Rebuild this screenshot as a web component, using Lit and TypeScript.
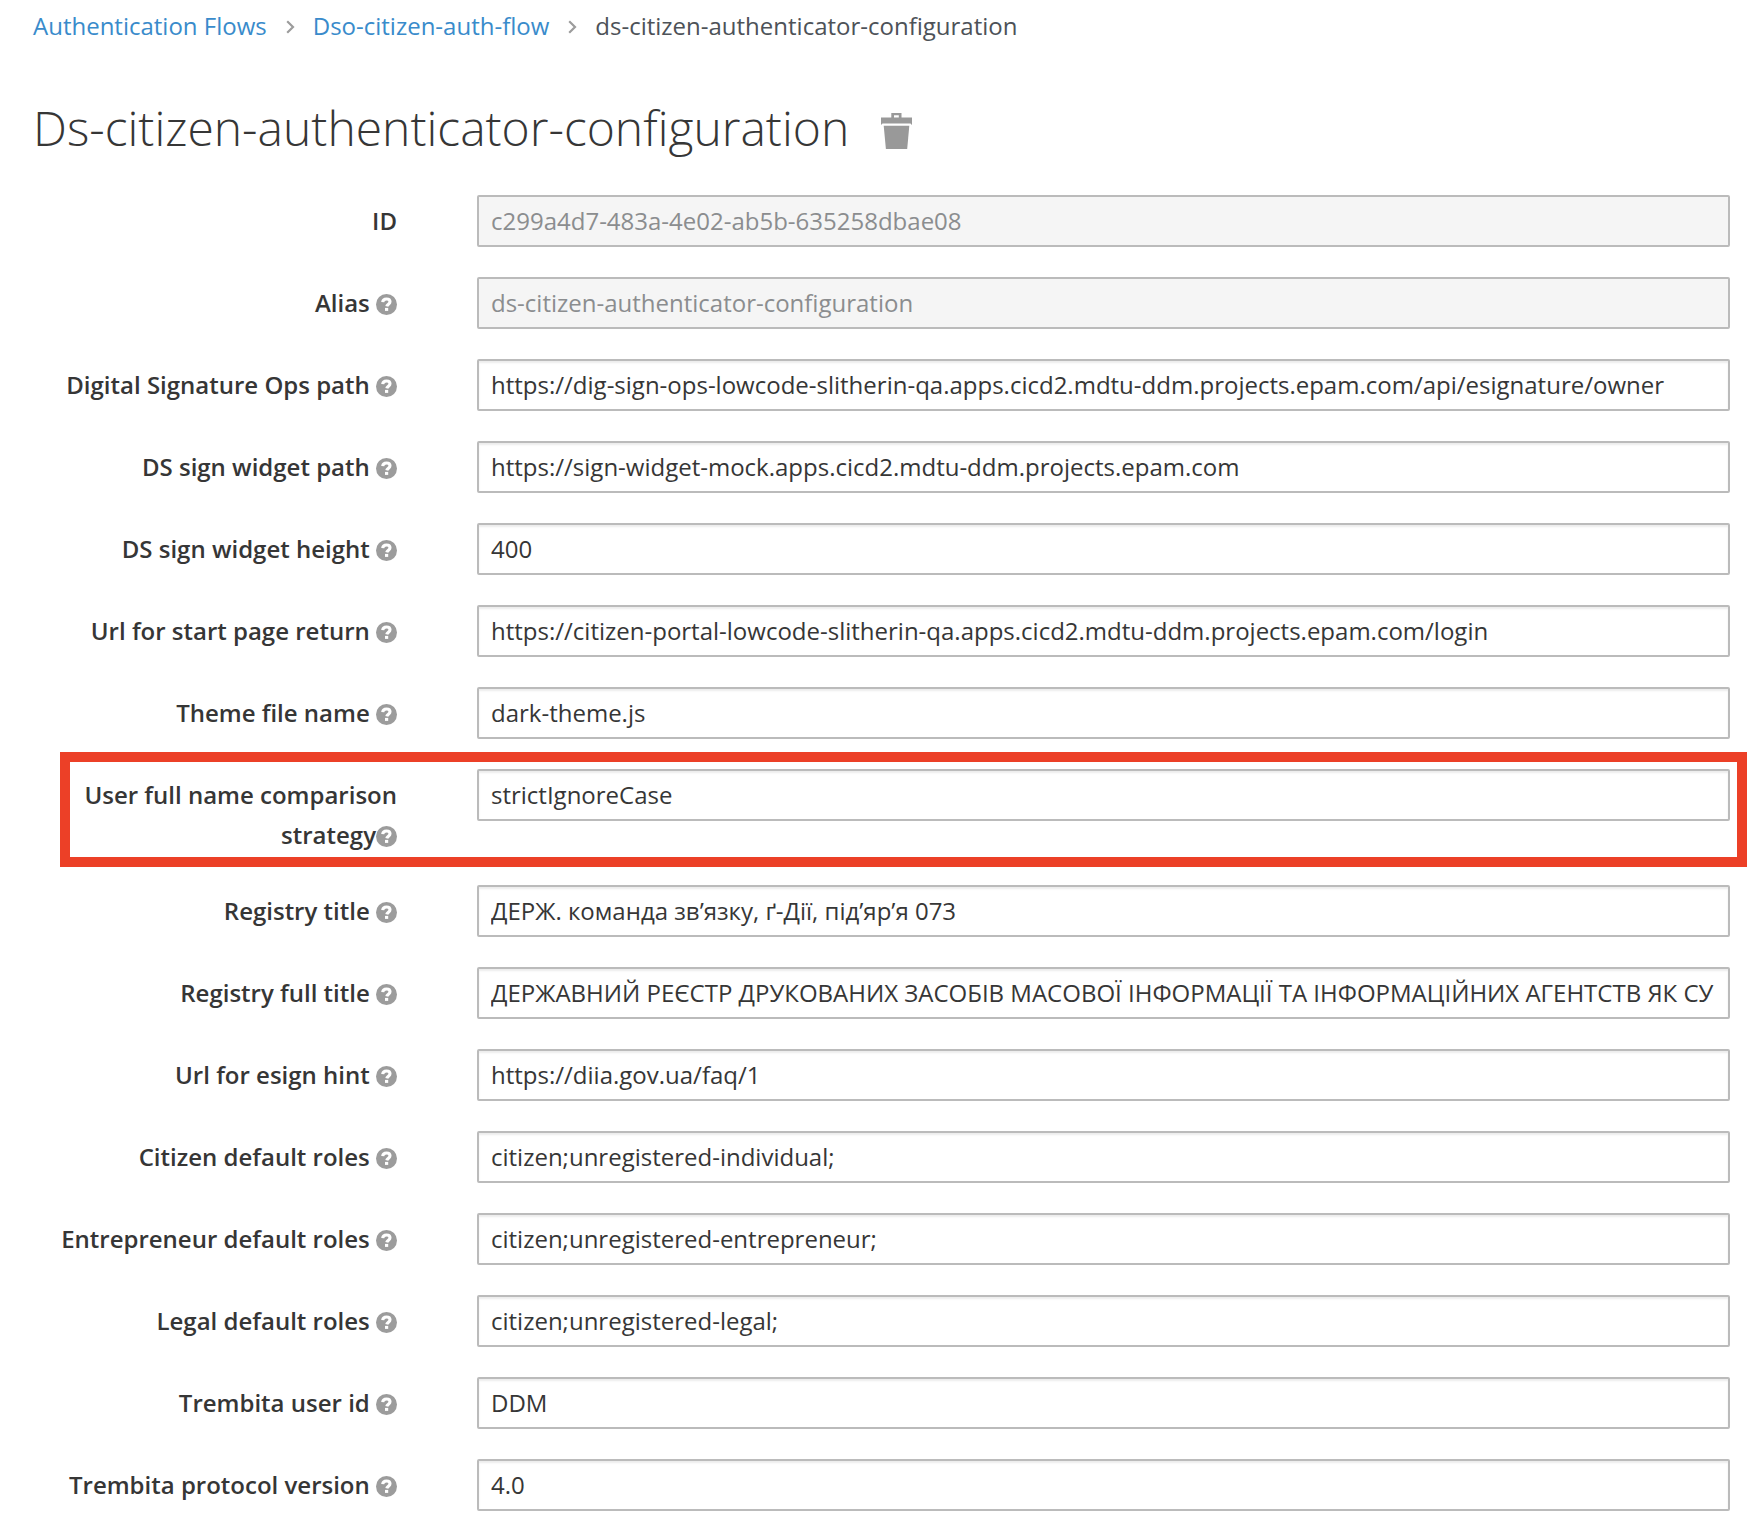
import { LitElement, html, css, svg, nothing } from "lit";
import { customElement, property } from "lit/decorators.js";

interface Field {
  id: string;
  label: string;
  value: string;
  help?: boolean;
  disabled?: boolean;
  highlighted?: boolean;
}

const FIELDS: Field[] = [
  { id: "id", label: "ID", value: "c299a4d7-483a-4e02-ab5b-635258dbae08", help: false, disabled: true },
  { id: "alias", label: "Alias", value: "ds-citizen-authenticator-configuration", disabled: true },
  {
    id: "ops-path",
    label: "Digital Signature Ops path",
    value: "https://dig-sign-ops-lowcode-slitherin-qa.apps.cicd2.mdtu-ddm.projects.epam.com/api/esignature/owner",
  },
  { id: "widget-path", label: "DS sign widget path", value: "https://sign-widget-mock.apps.cicd2.mdtu-ddm.projects.epam.com" },
  { id: "widget-height", label: "DS sign widget height", value: "400" },
  {
    id: "start-url",
    label: "Url for start page return",
    value: "https://citizen-portal-lowcode-slitherin-qa.apps.cicd2.mdtu-ddm.projects.epam.com/login",
  },
  { id: "theme", label: "Theme file name", value: "dark-theme.js" },
  { id: "comparison", label: "User full name comparison strategy", value: "strictIgnoreCase", highlighted: true },
  { id: "registry-title", label: "Registry title", value: "ДЕРЖ. команда зв’язку, ґ-Дії, під’яр’я 073" },
  {
    id: "registry-full-title",
    label: "Registry full title",
    value: "ДЕРЖАВНИЙ РЕЄСТР ДРУКОВАНИХ ЗАСОБІВ МАСОВОЇ ІНФОРМАЦІЇ ТА ІНФОРМАЦІЙНИХ АГЕНТСТВ ЯК СУ",
  },
  { id: "esign-hint", label: "Url for esign hint", value: "https://diia.gov.ua/faq/1" },
  { id: "citizen-roles", label: "Citizen default roles", value: "citizen;unregistered-individual;" },
  { id: "entrepreneur-roles", label: "Entrepreneur default roles", value: "citizen;unregistered-entrepreneur;" },
  { id: "legal-roles", label: "Legal default roles", value: "citizen;unregistered-legal;" },
  { id: "trembita-user", label: "Trembita user id", value: "DDM" },
  { id: "trembita-version", label: "Trembita protocol version", value: "4.0" },
];

const helpMark = svg`
  <circle cx="10.5" cy="10.5" r="10.5" fill="#9c9c9c"></circle>
  <path d="M6.7 8.2C6.9 6 8.4 5 10.5 5c2.1 0 3.5 1.1 3.5 2.8 0 2.3-2.8 2.4-3.2 4.6" fill="none" stroke="#fff" stroke-width="3.1"></path>
  <rect x="9" y="13.9" width="3.2" height="3" fill="#fff"></rect>`;

@customElement("config-field")
export class ConfigField extends LitElement {
  @property({ attribute: false }) field!: Field;

  static styles = css`
    :host {
      display: block;
    }
    .row {
      position: relative;
      display: grid;
      grid-template-columns: 364fr 1253fr;
      column-gap: 80px;
      align-items: start;
    }
    .highlighted::after {
      content: "";
      position: absolute;
      inset: -17px -17px -12px 27px;
      border: 10px solid #ec4027;
      pointer-events: none;
    }
    .label {
      padding-top: 6px;
      font-weight: 600;
      line-height: 40px;
      text-align: right;
      color: #363636;
    }
    .last {
      white-space: nowrap;
    }
    .help {
      width: 21px;
      height: 21px;
      vertical-align: -3px;
    }
    .input {
      box-sizing: border-box;
      width: 100%;
      height: 52px;
      margin: 0;
      padding: 3px 12px 5px;
      border: 2px solid #bbb;
      border-radius: 2px;
      background: #fff;
      box-shadow: inset 0 2px 2px rgba(3, 3, 3, 0.075);
      color: #363636;
      font: inherit;
      line-height: 40px;
    }
    .input:disabled {
      background: #f5f5f5;
      box-shadow: none;
      color: #8b8d8f;
    }
  `;

  render() {
    const f = this.field;
    const cut = f.label.lastIndexOf(" ") + 1;
    const gap = f.highlighted ? "" : " ";
    const help = f.help === false
      ? nothing
      : html`${gap}<svg class="help" viewBox="0 0 21 21" aria-hidden="true">${helpMark}</svg>`;
    return html`
      <div class="row ${f.highlighted ? "highlighted" : ""}">
        <label class="label" for=${f.id}>${f.label.slice(0, cut)}<span class="last">${f.label.slice(cut)}${help}</span></label>
        <input class="input" id=${f.id} type="text" .value=${f.value} ?disabled=${f.disabled} />
      </div>
    `;
  }
}

@customElement("app-root")
export class AppRoot extends LitElement {
  static styles = css`
    :host {
      display: block;
      padding: 6px 32px 18px 33px;
      background: #fff;
      color: #363636;
      font-family: "Open Sans", "Noto Sans", sans-serif;
      font-size: 24px;
      line-height: 40px;
    }
    .crumbs {
      display: flex;
      flex-wrap: wrap;
      align-items: center;
      margin: 0;
      padding: 0;
      list-style: none;
      color: #4d5258;
    }
    .crumb {
      display: flex;
      align-items: center;
    }
    .link {
      color: #398bcb;
      text-decoration: none;
    }
    .angle {
      width: 9px;
      height: 14px;
      margin: 2px 18px 0 19px;
    }
    .head {
      display: flex;
      align-items: center;
      gap: 32px;
      margin: 54px 0 39px;
    }
    .title {
      margin: 0;
      font-size: 48px;
      font-weight: 300;
      line-height: 56px;
    }
    .delete {
      display: flex;
      margin: 0;
      padding: 6px 0 0;
      border: 0;
      background: none;
      cursor: pointer;
    }
    .trash {
      width: 31px;
      height: 36px;
    }
    .form {
      display: flex;
      flex-direction: column;
      gap: 30px;
    }
  `;

  private angle() {
    return html`<svg class="angle" viewBox="0 0 9 14" aria-hidden="true">
      <path d="M1.2 1.2L7 7L1.2 12.8" fill="none" stroke="#9c9c9c" stroke-width="2.2"></path>
    </svg>`;
  }

  render() {
    return html`
      <nav>
        <ol class="crumbs">
          <li class="crumb"><a class="link" href="#flows">Authentication Flows</a>${this.angle()}</li>
          <li class="crumb"><a class="link" href="#flow">Dso-citizen-auth-flow</a>${this.angle()}</li>
          <li class="crumb">ds-citizen-authenticator-configuration</li>
        </ol>
      </nav>
      <header class="head">
        <h1 class="title">Ds-citizen-authenticator-configuration</h1>
        <button class="delete" type="button" aria-label="Delete">
          <svg class="trash" viewBox="0 0 31 36" fill="#999" aria-hidden="true">
            <path fill-rule="evenodd" d="M10.3 0H20.5V4.6H31V12L29.5 10.4H1.5L0 12V4.6H10.3ZM13 2.2V4.6H17.8V2.2Z"></path>
            <path d="M2.7 12.8H28.3L26.2 36H4.9Z"></path>
          </svg>
        </button>
      </header>
      <form class="form">
        ${FIELDS.map((f) => html`<config-field .field=${f}></config-field>`)}
      </form>
    `;
  }
}
